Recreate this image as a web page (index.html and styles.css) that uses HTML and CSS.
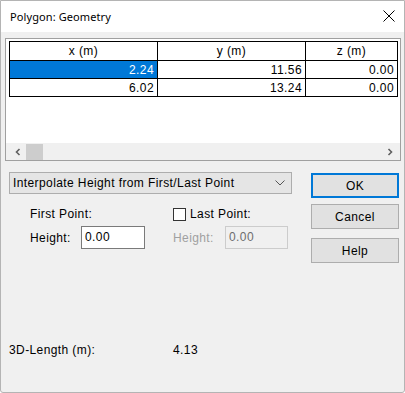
FILE: index.html
```html
<!DOCTYPE html>
<html lang="en">
<head>
    <meta charset="UTF-8">
    <title>Polygon: Geometry</title>
    <link rel="stylesheet" href="styles.css">
</head>
<body>
    <div class="window">
        <div class="titlebar">
            <span class="title">Polygon: Geometry</span>
            <svg class="close" width="12" height="12" viewBox="0 0 12 12">
                <path d="M0.5 0.5 L11.5 11.5 M11.5 0.5 L0.5 11.5" stroke="#000" stroke-width="1" fill="none"/>
            </svg>
        </div>

        <div class="content">
            <div class="list-frame">
                <div class="list-area">
                    <table class="grid">
                        <thead>
                            <tr>
                                <th class="col-x">x (m)</th>
                                <th class="col-y">y (m)</th>
                                <th class="col-z">z (m)</th>
                            </tr>
                        </thead>
                        <tbody>
                            <tr>
                                <td class="selected">2.24</td>
                                <td>11.56</td>
                                <td>0.00</td>
                            </tr>
                            <tr>
                                <td>6.02</td>
                                <td>13.24</td>
                                <td>0.00</td>
                            </tr>
                        </tbody>
                    </table>
                </div>
                <div class="hscroll">
                    <svg class="arrow" width="8" height="8" viewBox="0 0 8 8">
                        <path d="M5.5 1 L2.5 4 L5.5 7" stroke="#606060" stroke-width="1.6" fill="none"/>
                    </svg>
                    <div class="thumb"></div>
                    <div class="track"></div>
                    <svg class="arrow" width="8" height="8" viewBox="0 0 8 8">
                        <path d="M2.5 1 L5.5 4 L2.5 7" stroke="#606060" stroke-width="1.6" fill="none"/>
                    </svg>
                </div>
            </div>

            <div class="main-row">
                <div class="left-col">
                    <div class="combo">
                        <span>Interpolate Height from First/Last Point</span>
                        <svg width="10" height="6" viewBox="0 0 10 6">
                            <path d="M0.5 0.5 L5 5 L9.5 0.5" stroke="#555" stroke-width="1" fill="none"/>
                        </svg>
                    </div>

                    <div class="points">
                        <div class="pt-row">
                            <div class="pt-cell first">First Point:</div>
                            <div class="pt-cell">
                                <span class="checkbox"></span>
                                <span>Last Point:</span>
                            </div>
                        </div>
                        <div class="pt-row">
                            <div class="pt-cell first">
                                <span class="h-label">Height:</span>
                                <div class="field">0.00</div>
                            </div>
                            <div class="pt-cell">
                                <span class="h-label disabled">Height:</span>
                                <div class="field off">0.00</div>
                            </div>
                        </div>
                    </div>
                </div>

                <div class="buttons">
                    <div class="btn default">OK</div>
                    <div class="btn cancel">Cancel</div>
                    <div class="btn help">Help</div>
                </div>
            </div>

            <div class="length-row">
                <span class="length-label">3D-Length (m):</span>
                <span>4.13</span>
            </div>
        </div>
    </div>
</body>
</html>
```

FILE: styles.css
```css
body {
    margin: 0;
    background: #ffffff;
    font-family: "Liberation Sans", Arial, sans-serif;
    font-size: 12px;
    letter-spacing: 0.4px;
    color: #000;
}

.window {
    width: 405px;
    height: 393px;
    box-sizing: border-box;
    border: 1px solid #b4b4b4;
    border-radius: 0 0 3px 3px;
    background: #f0f0f0;
    display: flex;
    flex-direction: column;
}

.titlebar {
    height: 31px;
    background: #ffffff;
    display: flex;
    align-items: center;
    justify-content: space-between;
    padding: 0 9px 0 9px;
    flex-shrink: 0;
}

.title {
    font-family: "Noto Sans", "Open Sans", sans-serif;
    font-size: 11px;
    letter-spacing: 0.1px;
    margin-top: -1px;
}

.close {
    margin-top: -1px;
}

.content {
    padding: 6px 3px 0 4px;
    flex: 1;
}

/* list control */
.list-frame {
    width: 396px;
    height: 123px;
    box-sizing: border-box;
    border: 1px solid #a0a0a0;
    background: #ffffff;
    display: flex;
    flex-direction: column;
}

.list-area {
    flex: 1;
    padding: 2px 0 0 3px;
}

.grid {
    border-collapse: collapse;
    table-layout: fixed;
    width: 389px;
}

.grid th,
.grid td {
    border: 1px solid #000;
    padding: 0 3px;
    font-weight: normal;
    line-height: 16px;
    height: 17px;
    white-space: nowrap;
}

.grid th {
    text-align: center;
    height: 18px;
}

.grid td {
    text-align: right;
}

.col-x,
.col-y {
    width: 141px;
}

.grid td.selected {
    background: #0078d7;
    color: #ffffff;
}

.hscroll {
    height: 17px;
    background: #f0f0f0;
    display: flex;
    align-items: center;
}

.arrow {
    width: 8px;
    margin: 0 6px 0 8px;
}

.hscroll .arrow:last-child {
    margin: 0 6px 0 4px;
}

.thumb {
    width: 17px;
    height: 16px;
    background: #cdcdcd;
    margin-left: -2px;
}

.track {
    flex: 1;
}

/* lower part */
.main-row {
    display: flex;
    justify-content: space-between;
    margin-top: 11px;
    padding-left: 4px;
}

.combo {
    width: 283px;
    height: 22px;
    box-sizing: border-box;
    border: 1px solid #adadad;
    background: #e5e5e5;
    display: flex;
    align-items: center;
    justify-content: space-between;
    padding: 0 6px 0 3px;
}

.points {
    padding-left: 21px;
    margin-top: 13px;
}

.pt-row {
    display: flex;
    align-items: center;
}

.pt-row + .pt-row {
    margin-top: 5px;
}

.pt-cell {
    display: flex;
    align-items: center;
}

.pt-cell.first {
    width: 143px;
}

.checkbox {
    width: 13px;
    height: 13px;
    box-sizing: border-box;
    border: 1px solid #333;
    background: #ffffff;
    margin-right: 4px;
}

.h-label {
    width: 51px;
}

.h-label.disabled {
    width: 52px;
    color: #a0a0a0;
}

.field {
    width: 64px;
    height: 23px;
    box-sizing: border-box;
    border: 1px solid #7a7a7a;
    background: #ffffff;
    padding: 0 3px;
    line-height: 21px;
}

.field.off {
    width: 63px;
    border-color: #cccccc;
    background: #f0f0f0;
    color: #6d6d6d;
}

.buttons {
    display: flex;
    flex-direction: column;
    margin-right: 2px;
    margin-top: 1px;
}

.btn {
    width: 88px;
    height: 25px;
    box-sizing: border-box;
    border: 1px solid #adadad;
    background: #e1e1e1;
    display: flex;
    align-items: center;
    justify-content: center;
}

.btn.default {
    border: 2px solid #0078d7;
}

.btn.cancel {
    margin-top: 6px;
}

.btn.help {
    margin-top: 9px;
}

.length-row {
    margin-top: 80px;
    padding-left: 4px;
    display: flex;
}

.length-label {
    width: 164px;
}
```
